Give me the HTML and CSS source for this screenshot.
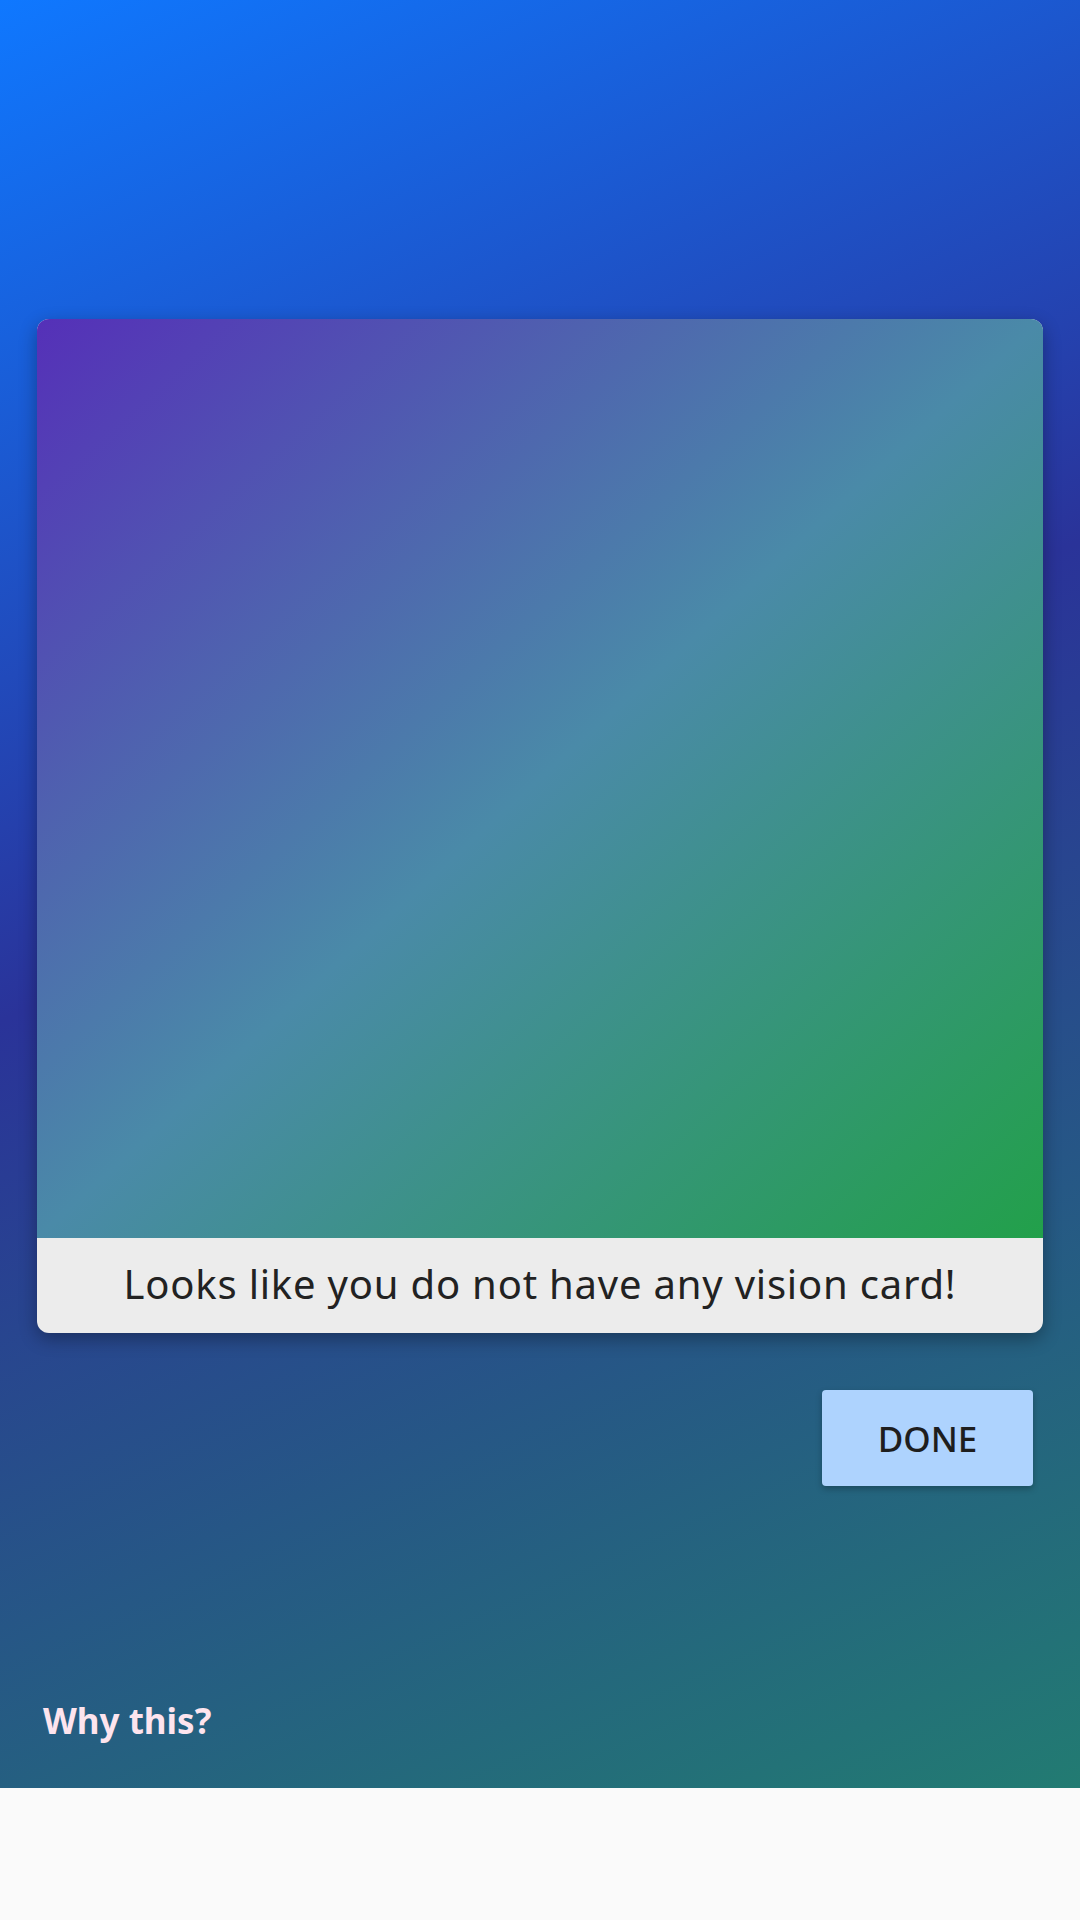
FILE: index.html
```html
<!DOCTYPE html>
<html>
<head>
<meta charset="utf-8">
<link rel="stylesheet" href="styles.css">
</head>
<body>
<div class="screen">
  <div class="card">
    <div class="card-image"></div>
    <div class="card-caption">Looks like you do not have any vision card!</div>
  </div>
  <div class="actions">
    <button class="done-btn">DONE</button>
  </div>
  <div class="footer">
    <span class="why">Why this?</span>
  </div>
</div>
<div class="bottom"></div>
</body>
</html>
```
FILE: styles.css
```css
html, body {
  margin: 0;
  padding: 0;
  background: #fafafa;
}
body {
  width: 1080px;
  height: 1920px;
  font-family: "Noto Sans", "Open Sans", sans-serif;
}
.screen {
  height: 1788px;
  box-sizing: border-box;
  padding: 319px 37px 0 37px;
  display: flex;
  flex-direction: column;
  background: linear-gradient(156deg, #0f78ff 0%, #2a3399 45%, #227b72 100%);
}
.card {
  border-radius: 12px;
  overflow: hidden;
  box-shadow: 0 6px 18px rgba(0, 0, 0, 0.32);
  background: #ececec;
}
.card-image {
  height: 919px;
  background: linear-gradient(to bottom right, #5530b8 0%, #4a8aa8 50%, #22a04a 100%);
}
.card-caption {
  height: 95px;
  display: flex;
  align-items: center;
  justify-content: center;
  padding-bottom: 4px;
  box-sizing: border-box;
  font-size: 40px;
  color: #222;
  letter-spacing: 0.8px;
}
.actions {
  display: flex;
  justify-content: flex-end;
  margin-top: 57px;
  padding-right: 10px;
}
.done-btn {
  width: 211px;
  height: 96px;
  border: none;
  border-radius: 4px;
  background: #aed3fe;
  box-shadow: 0 3px 6px rgba(0, 0, 0, 0.25);
  font-family: "Noto Sans", "Open Sans", sans-serif;
  font-size: 35px;
  font-weight: 500;
  color: #1e1e1e;
  padding: 0;
}
.footer {
  margin-top: auto;
  height: 85px;
  padding-left: 6px;
}
.why {
  font-size: 35px;
  font-weight: 700;
  color: #fde4ee;
  line-height: 1;
}
.bottom {
  height: 132px;
  background: #fafafa;
}
```
